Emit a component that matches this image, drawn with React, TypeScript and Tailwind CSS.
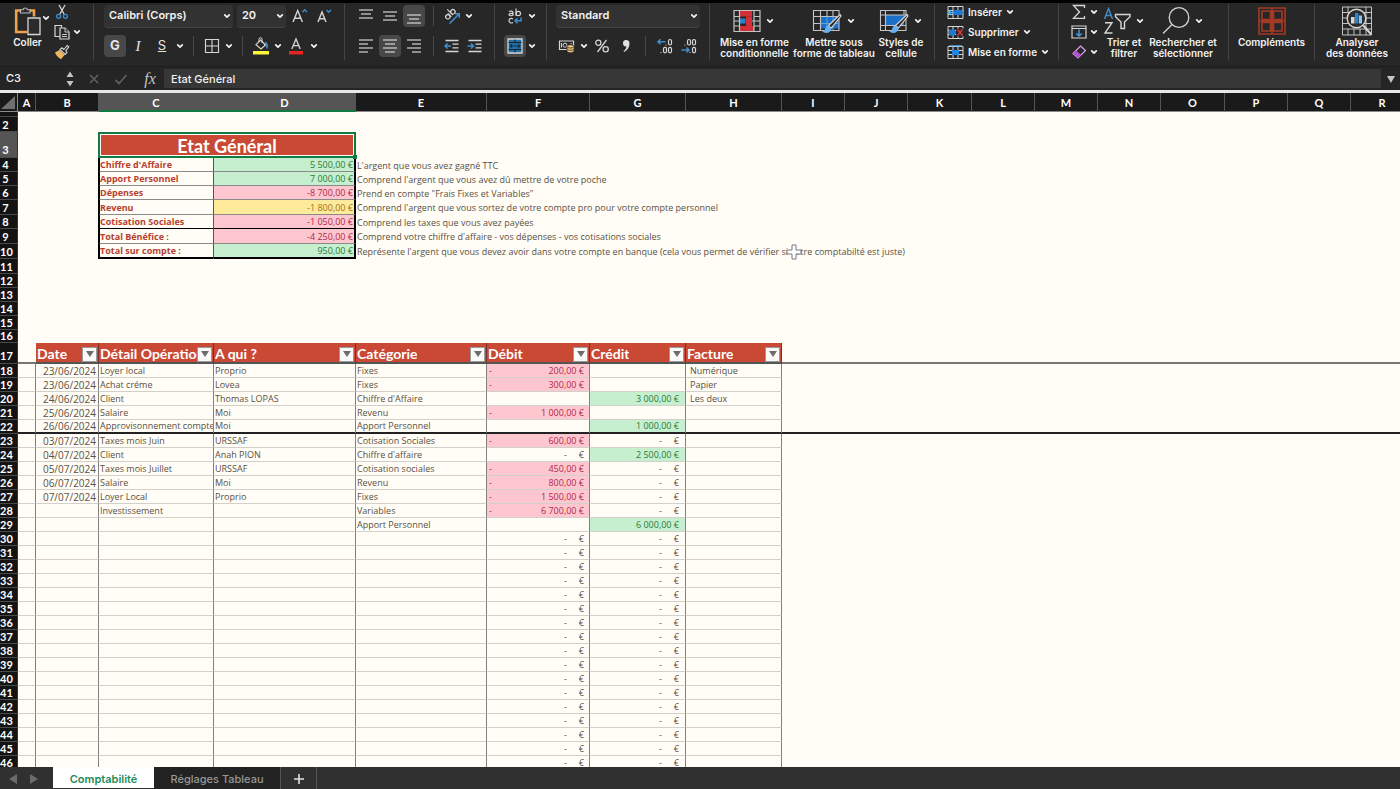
import React from 'react';

type Kids = { children?: React.ReactNode };

const Chevron = () => (
  <svg viewBox="0 0 12 12" className="h-3 w-3 shrink-0" fill="none" stroke="#f2f2f2" strokeWidth="1.7" strokeLinecap="round" strokeLinejoin="round">
    <path d="M3.7 4.8 6 7.2l2.3-2.4" />
  </svg>
);

const Sep = () => <div className="mx-[7px] h-5 w-px shrink-0 bg-[#484848]" />;

function Tool({ label, className = 'w-6', active = false, children }: Kids & { label: string; className?: string; active?: boolean }) {
  return (
    <button type="button" aria-label={label} title={label} className={`flex shrink-0 items-center justify-center ${className}`}>
      <span className={`flex h-[22px] items-center justify-center rounded-sm ${active ? 'w-[22px] bg-[#484848]' : ''}`}>{children}</span>
    </button>
  );
}

const Drop = ({ label }: { label: string }) => (
  <button type="button" aria-label={label} className="flex w-3 shrink-0 items-center justify-center">
    <Chevron />
  </button>
);

function Picker({ label, value, className }: { label: string; value: string; className: string }) {
  return (
    <label className={`relative flex h-[23px] items-center rounded-sm border-b border-[#444] bg-[#323232] ${className}`}>
      <select aria-label={label} defaultValue={value} className="h-full w-full appearance-none bg-transparent pl-[5px] text-[11px] font-semibold text-[#f2f2f2] outline-none">
        <option>{value}</option>
      </select>
      <span className="pointer-events-none absolute right-0">
        <Chevron />
      </span>
    </label>
  );
}

const Group = ({ className, children }: Kids & { className: string }) => (
  <div className={`h-14 shrink-0 border-r border-[#444] ${className}`}>{children}</div>
);

const Line = ({ className = '', children }: Kids & { className?: string }) => (
  <div className={`flex h-6 items-center ${className}`}>{children}</div>
);

function BigTool({ icon, lines, drop = true, className }: { icon: React.ReactNode; lines: string[]; drop?: boolean; className: string }) {
  return (
    <button type="button" className={`flex shrink-0 flex-col items-center text-[10px] leading-[11px] font-semibold whitespace-nowrap text-[#f2f2f2] ${className}`}>
      <span className="flex h-[33px] items-center gap-[3px]">
        {icon}
        {drop && <Chevron />}
      </span>
      {lines.map((l) => (
        <span key={l}>{l}</span>
      ))}
    </button>
  );
}

const Bars = ({ rows }: { rows: [number, number, number][] }) => (
  <svg viewBox="0 0 14 16" className="h-4 w-[14px]" stroke="#d6d6d6" strokeWidth="1.2">
    {rows.map(([a, b, y]) => (
      <path key={y} d={`M${a} ${y}H${b}`} />
    ))}
  </svg>
);

const PasteIcon = () => (
  <svg viewBox="0 0 28 30" className="h-[30px] w-7" fill="none">
    <path d="M7 4.5H2.2V26h11" stroke="#eda24b" strokeWidth="2.6" />
    <path d="M15.500 4.500h4.500v6" stroke="#eda24b" strokeWidth="2.6" />
    <path d="M6.500 7V3.800h2.500a2.300 2.300 0 0 1 4.500 0H16V7z" fill="#2b2b2b" stroke="#bdbdbd" strokeWidth="1.1" />
    <path d="M14 12h12v16.500H14z" fill="#2b2b2b" stroke="#d6d6d6" strokeWidth="1.3" />
  </svg>
);

const CutIcon = () => (
  <svg viewBox="0 0 14 16" className="h-4 w-[14px]" fill="none" strokeWidth="1.3">
    <path d="M4 1l5.300 9.500M10 1 4.700 10.500" stroke="#d6d6d6" />
    <circle cx="3.600" cy="12.300" r="2" stroke="#3f8fd0" />
    <circle cx="10.400" cy="12.300" r="2" stroke="#3f8fd0" />
  </svg>
);

const CopyIcon = () => (
  <svg viewBox="0 0 16 16" className="h-4 w-4" fill="#2b2b2b" stroke="#d6d6d6" strokeWidth="1.2">
    <path d="M6 12.500H1V1.500h6.500v2" />
    <path d="M6 4h5l4 4v7H6z" />
    <path d="M11 4v4h4M8 10.500h5M8 12.500h5" strokeWidth=".9" />
  </svg>
);

const BrushIcon = () => (
  <svg viewBox="0 0 16 16" className="h-4 w-4">
    <path d="M1 8.500 5.500 6l5 5L7 15.200C4.500 14 2.200 11.500 1 8.500z" fill="#f0b35e" />
    <path d="m6 5.500 2-1.700 1.800 1.700L13.200 1.500l1.600 1.300-3 4L13 8.500l-2 2z" fill="#2b2b2b" stroke="#d6d6d6" strokeWidth="1.1" />
  </svg>
);

const FontSizeIcon = ({ up }: { up: boolean }) => (
  <svg viewBox="0 0 18 16" className="h-4 w-[18px]" fill="none" strokeWidth="1.4">
    {up ? <path d="M2 14 6.700 2.500 11.400 14M3.500 10.200h6.400" stroke="#d6d6d6" /> : <path d="M3 14 7 4l4 10M4.300 10.700h5.400" stroke="#d6d6d6" />}
    <path d={up ? 'm11.500 4 2.200-2.200L16 4' : 'm11.500 2 2.200 2.200L16 2'} stroke="#3f8fd0" />
  </svg>
);

const BorderIcon = () => (
  <svg viewBox="0 0 16 16" className="h-4 w-4" fill="none" stroke="#d6d6d6" strokeWidth="1.100">
    <path d="M1.500 1.500h13v13h-13zM8 1.500v13M1.500 8h13" />
  </svg>
);

const BucketIcon = () => (
  <svg viewBox="0 0 18 18" className="h-[18px] w-[18px]" fill="none">
    <path d="m8.500 3 5 5-4.500 4-5-4.300z" stroke="#d6d6d6" strokeWidth="1.200" />
    <path d="M7 5V2.200a1.500 1.500 0 0 1 3 0V6" stroke="#d6d6d6" />
    <path d="M13 5.500c2 .5 2.500 3 1.800 6" stroke="#3f8fd0" strokeWidth="1.600" />
    <path d="M1 14h16v3.500H1z" fill="#fbf53c" />
  </svg>
);

const FontColorIcon = () => (
  <svg viewBox="0 0 16 18" className="h-[18px] w-4" fill="none">
    <path d="M3.800 12 8 2l4.200 10M5.200 8.700h5.600" stroke="#d6d6d6" strokeWidth="1.300" />
    <path d="M1 14h14v3.500H1z" fill="#e5231f" />
  </svg>
);

const OrientIcon = () => (
  <svg viewBox="0 0 18 18" className="h-[18px] w-[18px]" fill="none" stroke="#d6d6d6" strokeWidth="1.200">
    <g transform="rotate(-45 7 7)">
      <circle cx="3.500" cy="7.500" r="2.200" />
      <path d="M5.900 5v5M8.300 1.800v8" />
      <circle cx="10.600" cy="7.500" r="2.200" />
    </g>
    <path d="M6.500 16.500 16 7M16.300 11V6.700H12" stroke="#3f8fd0" strokeWidth="1.500" />
  </svg>
);

const IndentIcon = ({ out }: { out: boolean }) => (
  <svg viewBox="0 0 16 16" className="h-4 w-4" fill="none" strokeWidth="1.300">
    <path d="M1.500 2.500h13M8.500 6.200h6M8.500 9.800h6M1.500 13.500h13" stroke="#d6d6d6" />
    <path d={out ? 'M7 8H1M3.500 5.500 1 8l2.500 2.500' : 'M.5 8h6M4 5.500 6.500 8 4 10.500'} stroke="#3f8fd0" strokeWidth="1.500" />
  </svg>
);

const WrapIcon = () => (
  <svg viewBox="0 0 16 18" className="h-[18px] w-4" fill="none" stroke="#d6d6d6" strokeWidth="1.200">
    <path d="M2 4.600c1.500-1 4-.6 4 1v3.200M6 6.500C3.500 6.200 2 6.800 2 7.800s2.500 1.600 4-.1M9 1.500v7.300" />
    <circle cx="11.300" cy="6.500" r="2.200" />
    <path d="M6 12c-2-1.300-4-.3-4 1.700s2 3 4 1.700" />
    <path d="M14 10.500v3.300H8M10.500 11.300 8 13.800l2.500 2.500" stroke="#3f8fd0" strokeWidth="1.500" />
  </svg>
);

const MergeIcon = () => (
  <svg viewBox="0 0 16 16" className="h-4 w-4" fill="none">
    <path d="M1 1h14v14H1z" fill="#1f6fa8" stroke="#d6d6d6" strokeWidth="1.300" />
    <path d="M1.600 4.500h12.800M1.600 11.500h12.800M8 1.600v2.900M8 11.500v2.900" stroke="#222" strokeWidth="1" />
    <path d="M3 8h10M5 6.300 3 8l2 1.700M11 6.300 13 8l-2 1.700" stroke="#16344a" strokeWidth="1.200" />
  </svg>
);

const CurrencyIcon = () => (
  <svg viewBox="0 0 18 16" className="h-4 w-[18px]" fill="none">
    <path d="M1.500 3h14v8.500h-14z" stroke="#d6d6d6" strokeWidth="1.200" />
    <circle cx="7" cy="7.200" r="2" stroke="#d6d6d6" />
    <path d="M3.500 5v4.500M13 5v1" stroke="#d6d6d6" />
    <path d="M9 8.500c0-2.300 7-2.300 7 0V13c0 2.300-7 2.300-7 0z" fill="#f0c673" stroke="#2b2b2b" strokeWidth=".8" />
    <path d="M9.500 9.300c1.500 1 4.500 1 6 0M9.500 11.600c1.500 1 4.500 1 6 0" stroke="#2b2b2b" strokeWidth=".8" />
  </svg>
);

const PercentIcon = () => (
  <svg viewBox="0 0 16 16" className="h-4 w-4" fill="none" stroke="#d6d6d6" strokeWidth="1.300">
    <circle cx="4.300" cy="4.700" r="2.600" />
    <circle cx="11.700" cy="11.300" r="2.600" />
    <path d="m12.500 2-9 12" />
  </svg>
);

const CommaIcon = () => (
  <svg viewBox="0 0 10 14" className="h-[14px] w-[10px]" fill="#e0e0e0">
    <path d="M5 1a3.200 3.200 0 0 1 3.500 3.300C8.500 8.500 6.500 11.500 3 13l-.5-1c1.800-1.200 2.800-2.700 2.900-4.600A3.200 3.200 0 1 1 5 1z" />
  </svg>
);

const DecimalIcon = ({ add }: { add: boolean }) => (
  <svg viewBox="0 0 18 16" className="h-4 w-[18px]" fill="none" stroke="#d6d6d6" strokeWidth="1.200">
    {!add && <rect x="7.500" y="1.500" width="3" height="5.500" rx="1.500" />}
    <rect x="12.500" y="1.500" width="3" height="5.500" rx="1.500" />
    {add && <rect x="7.500" y="9.300" width="3" height="5.500" rx="1.500" />}
    <rect x="12.500" y="9.300" width="3" height="5.500" rx="1.500" />
    <path d={add ? 'M10 6.700v.8M5 14.200v.8' : 'M5 6.700v.8M10 14.200v.8'} strokeWidth="1.300" />
    <path d={add ? 'M9.500 3.800H2M4.500 1.300 2 3.800l2.500 2.500' : 'M1.500 12H9M6.500 9.500 9 12l-2.500 2.500'} stroke="#3f8fd0" strokeWidth="1.500" />
  </svg>
);

const BrushOver = () => (
  <>
    <path d="M28 6.500 16.500 17.500l2.800 2.700L29 8z" fill="#2b2b2b" stroke="#d6d6d6" strokeWidth="1.200" />
    <path d="M16.800 17.800c-3 0-3.300 2.200-4 4-.5 1-1.500 1.700-2.800 1.700 3.800 2.700 8.900 1.500 9.500-3z" fill="#69b1ee" />
  </>
);

const CondIcon = () => (
  <svg viewBox="0 0 28 24" className="h-6 w-7" fill="none">
    <path d="M6.500 1.500H19v6H6.500zM6.500 17H21v5H6.500z" fill="#d22f38" />
    <path d="M13 7.500h6V17h-6z" fill="#d22f38" />
    <path d="M6.500 9.500h6v5h-6z" fill="#2a83cf" />
    <path d="M1 1.500h26v21H1zM1 7.500h5.500M21 7.500h6M1 12h5.500M19 12h8M1 17h5.500M21 17h6M6.500 1.500v21M21 1.500v21" stroke="#c4c4c4" strokeWidth="1.200" />
  </svg>
);

const TableIcon = () => (
  <svg viewBox="0 0 30 26" className="h-[26px] w-[30px]" fill="none">
    <path d="M8.500 8.500H27v12H8.500z" fill="#1c70c8" />
    <path d="M1.500 2.500H27v20H1.500zM1.500 8.500H27M1.500 15.500H8.500M8.500 2.500v20M15 2.500v6M21 2.500v6" stroke="#c4c4c4" strokeWidth="1.100" />
    <path d="M8.500 15.500H27M15 8.500v14M21 8.500v14" stroke="#6ea9df" strokeWidth=".9" />
    <BrushOver />
  </svg>
);

const StylesIcon = () => (
  <svg viewBox="0 0 30 26" className="h-[26px] w-[30px]" fill="none">
    <path d="M6.500 7H25v10.500H6.500z" fill="#1c70c8" />
    <path d="M1.500 2.500H27v20H1.500zM1.500 7H27M1.500 17.500H27M6.500 2.500v20M25 2.500v5" stroke="#c4c4c4" strokeWidth="1.100" />
    <BrushOver />
  </svg>
);

const CellsIcon = ({ kind }: { kind: 'insert' | 'delete' | 'format' }) => (
  <svg viewBox="0 0 17 15" className="h-[15px] w-[17px]" fill="none">
    <path d="M1 1.500h15v12H1zM1 5.500h15M1 9.500h15M6 1.500v12M11 1.500v12" stroke="#d6d6d6" />
    {kind === 'insert' && <path d="M6 5h9.500v5H6z" fill="#1c78d2" />}
    {kind === 'insert' && <path d="M7 7.500H1.500M4 5 1.500 7.500 4 10" stroke="#57aef0" strokeWidth="1.500" />}
    {kind === 'delete' && <path d="M2 4.500h5.500L9.500 7.500l-2 3H2z" fill="#1c78d2" />}
    {kind === 'delete' && <path d="M9 3.500h8v8H9z" fill="#2b2b2b" />}
    {kind === 'delete' && <path d="m10.500 4.500 5 6m0-6-5 6" stroke="#e0343c" strokeWidth="1.500" />}
    {kind === 'format' && <path d="M5 5h7v5H5z" fill="#1c88e8" />}
    {kind === 'format' && <path d="M2 .8h13M5.500.3v1.400M11.500.3v1.400" stroke="#57aef0" />}
  </svg>
);

const SumIcon = () => (
  <svg viewBox="0 0 14 16" className="h-4 w-[14px]" fill="none" stroke="#d6d6d6" strokeWidth="1.300">
    <path d="M12.500 4V1.500h-11L7.500 8l-6 6.300h11V12" />
  </svg>
);

const FillIcon = () => (
  <svg viewBox="0 0 16 14" className="h-[14px] w-4" fill="none" stroke="#d6d6d6" strokeWidth="1.200">
    <path d="M1 1h14v12H1zM1 3.500h14" />
    <path d="M8 4.500V11M5.300 8.500 8 11l2.700-2.500" stroke="#3f9be0" strokeWidth="1.500" />
  </svg>
);

const EraserIcon = () => (
  <svg viewBox="0 0 16 16" className="h-4 w-4" fill="none" strokeWidth="1.200">
    <path d="m9.500 2 5 4.500L7 14 2 9.500z" stroke="#d9a3e6" />
    <path d="M5 6.500 10.200 11 7 14 2 9.500z" fill="#b44fd0" />
  </svg>
);

const SortIcon = () => (
  <svg viewBox="0 0 28 28" className="h-7 w-7" fill="none" strokeWidth="1.400">
    <path d="m1.500 12 4-10.500 4 10.500M2.900 8.500h5.200" stroke="#3f8fd0" />
    <path d="M2 15.700h7L2 26h7.500" stroke="#d6d6d6" />
    <path d="M12.500 7.500H27v2.300L21.500 15v6.500H18V15l-5.500-5.200z" stroke="#d6d6d6" />
  </svg>
);

const FindIcon = () => (
  <svg viewBox="0 0 28 30" className="h-[30px] w-7" fill="none" stroke="#d6d6d6" strokeWidth="1.300">
    <circle cx="17" cy="11.500" r="9.800" />
    <path d="M10 18.500 1 27.500" />
  </svg>
);

const AddinsIcon = () => (
  <svg viewBox="0 0 28 30" className="h-[30px] w-7" fill="none" stroke="#a43a26" strokeWidth="1.600">
    <path d="M1 2h26v26H1z" />
    <path d="M4 5h8.500v8.500H4zM15.500 5H24v8.500h-8.500zM4 16.500h8.500V25H4zM15.500 16.500H24V25h-8.500zM14 2v26M1 15h26" />
  </svg>
);

const AnalyseIcon = () => (
  <svg viewBox="0 0 32 32" className="h-8 w-8" fill="none">
    <path d="M1.500 2h29v28h-29zM1.500 7.500h29M1.500 13h29M1.500 18.500h29M1.500 24h29M7 24v6M13 24v6M19 24v6M25 2v28M7 2v5" stroke="#c4c4c4" />
    <circle cx="15.500" cy="13.500" r="9.300" fill="#2b2b2b" stroke="#d6d6d6" strokeWidth="1.400" />
    <path d="M10 12h3.500v6.500H10z" fill="#d6d6d6" />
    <path d="M14 8h3.500v10.500H14z" fill="#2a83cf" />
    <path d="M18 10.500h3v8h-3z" fill="#8cc4f2" />
    <path d="m22.300 20.500 8 9" stroke="#d6d6d6" strokeWidth="2" />
  </svg>
);

function Ribbon() {
  return (
    <header className="flex items-start overflow-hidden border-t-[3px] border-black bg-[#272727] pt-px pb-[6px]">
      <Group className="flex w-[94px] pl-[7px]">
        <BigTool className="w-[41px]" drop={false} icon={<PasteIcon />} lines={['Coller']} />
        <div className="-ml-2 flex w-[9px] shrink-0 items-start pt-2">
          <Drop label="Options de collage" />
        </div>
        <div className="ml-[5px] flex flex-col gap-[4px]">
          <Tool label="Couper" className="h-4 w-4"><CutIcon /></Tool>
          <div className="flex h-4 gap-px">
            <Tool label="Copier" className="w-4"><CopyIcon /></Tool>
            <Drop label="Options de copie" />
          </div>
          <Tool label="Reproduire la mise en forme" className="h-4 w-4"><BrushIcon /></Tool>
        </div>
      </Group>

      <Group className="flex w-[251px] flex-col gap-[6px] pl-[10px]">
        <Line>
          <Picker label="Police" value="Calibri (Corps)" className="mr-1 w-[129px]" />
          <Picker label="Taille" value="20" className="mr-[2px] w-[49px]" />
          <Tool label="Augmenter la taille"><FontSizeIcon up /></Tool>
          <Tool label="Diminuer la taille"><FontSizeIcon up={false} /></Tool>
        </Line>
        <Line className="text-[13px] text-[#e6e6e6]">
          <Tool label="Gras" className="w-[22px]" active><b>G</b></Tool>
          <Tool label="Italique"><i className="font-['Liberation_Serif',serif] text-[15px]">I</i></Tool>
          <Tool label="Souligné"><u>S</u></Tool>
          <Drop label="Options de soulignement" />
          <Sep />
          <Tool label="Bordures" className="w-[22px]"><BorderIcon /></Tool>
          <Drop label="Options de bordures" />
          <Sep />
          <Tool label="Remplissage" className="w-[22px]"><BucketIcon /></Tool>
          <Drop label="Couleur de remplissage" />
          <Tool label="Couleur de police"><FontColorIcon /></Tool>
          <Drop label="Options de couleur" />
        </Line>
      </Group>

      <Group className="flex w-[150px] flex-col gap-[6px] pl-[9px]">
        <Line>
          <Tool label="Aligner en haut"><Bars rows={[[0, 14, 2], [2, 12, 6], [0, 14, 10]]} /></Tool>
          <Tool label="Centrer verticalement"><Bars rows={[[0, 14, 4], [2, 12, 8], [0, 14, 12]]} /></Tool>
          <Tool label="Aligner en bas" active><Bars rows={[[0, 14, 7], [2, 12, 11], [0, 14, 15]]} /></Tool>
          <Sep />
          <Tool label="Orientation" className="w-[22px]"><OrientIcon /></Tool>
          <Drop label="Options d'orientation" />
        </Line>
        <Line>
          <Tool label="Aligner à gauche"><Bars rows={[[0, 14, 2], [0, 9, 6], [0, 14, 10], [0, 9, 14]]} /></Tool>
          <Tool label="Centrer" active><Bars rows={[[0, 14, 2], [2, 12, 6], [0, 14, 10], [2, 12, 14]]} /></Tool>
          <Tool label="Aligner à droite"><Bars rows={[[0, 14, 2], [5, 14, 6], [0, 14, 10], [5, 14, 14]]} /></Tool>
          <Sep />
          <Tool label="Diminuer le retrait" className="w-[22px]"><IndentIcon out /></Tool>
          <Tool label="Augmenter le retrait"><IndentIcon out={false} /></Tool>
        </Line>
      </Group>

      <Group className="flex w-[52px] flex-col gap-[6px] pl-[9px]">
        <Line>
          <Tool label="Renvoyer à la ligne" className="w-[22px]"><WrapIcon /></Tool>
          <Drop label="Options de renvoi" />
        </Line>
        <Line>
          <Tool label="Fusionner" className="w-[22px]" active><MergeIcon /></Tool>
          <Drop label="Options de fusion" />
        </Line>
      </Group>

      <Group className="flex w-[163px] flex-col gap-[6px] pl-[9px]">
        <Line>
          <Picker label="Format de nombre" value="Standard" className="w-[144px]" />
        </Line>
        <Line>
          <Tool label="Format monétaire" className="w-[22px]"><CurrencyIcon /></Tool>
          <Drop label="Options monétaires" />
          <Tool label="Pourcentage"><PercentIcon /></Tool>
          <Tool label="Séparateur de milliers"><CommaIcon /></Tool>
          <Sep />
          <Tool label="Ajouter une décimale"><DecimalIcon add /></Tool>
          <Tool label="Réduire les décimales"><DecimalIcon add={false} /></Tool>
        </Line>
      </Group>

      <Group className="flex w-[225px] pl-2">
        <BigTool className="w-[73px]" icon={<CondIcon />} lines={['Mise en forme', 'conditionnelle']} />
        <BigTool className="w-[86px]" icon={<TableIcon />} lines={['Mettre sous', 'forme de tableau']} />
        <BigTool className="w-12" icon={<StylesIcon />} lines={['Styles de', 'cellule']} />
      </Group>

      <Group className="flex w-[124px] flex-col gap-1 pl-3 text-[10px] font-semibold text-[#f2f2f2]">
        <button type="button" className="flex h-4 items-center"><CellsIcon kind="insert" /><span className="mr-[2px] ml-1">Insérer</span><Chevron /></button>
        <button type="button" className="flex h-4 items-center"><CellsIcon kind="delete" /><span className="mr-[2px] ml-1">Supprimer</span><Chevron /></button>
        <button type="button" className="flex h-4 items-center"><CellsIcon kind="format" /><span className="mr-[2px] ml-1 whitespace-nowrap">Mise en forme</span><Chevron /></button>
      </Group>

      <Group className="flex w-[170px] pl-[10px]">
        <div className="flex w-[33px] shrink-0 flex-col gap-1">
          <div className="flex h-4 items-center"><Tool label="Somme automatique" className="w-[19px]"><SumIcon /></Tool><Drop label="Fonctions" /></div>
          <div className="flex h-4 items-center"><Tool label="Remplir" className="w-[19px]"><FillIcon /></Tool><Drop label="Options de remplissage" /></div>
          <div className="flex h-4 items-center"><Tool label="Effacer" className="w-[19px]"><EraserIcon /></Tool><Drop label="Options d'effacement" /></div>
        </div>
        <BigTool className="w-11" icon={<SortIcon />} lines={['Trier et', 'filtrer']} />
        <BigTool className="w-[74px]" icon={<FindIcon />} lines={['Rechercher et', 'sélectionner']} />
      </Group>

      <Group className="flex w-[86px] justify-center">
        <BigTool className="w-20" drop={false} icon={<AddinsIcon />} lines={['Compléments']} />
      </Group>
      <div className="flex w-[84px] shrink-0 justify-center">
        <BigTool className="w-20" drop={false} icon={<AnalyseIcon />} lines={['Analyser', 'des données']} />
      </div>
    </header>
  );
}

function FormulaBar() {
  return (
    <div className="flex h-6 items-center border-t border-[#1c1c1c] bg-[#252525] text-[11px] font-medium text-[#f2f2f2]">
      <input aria-label="Zone Nom" defaultValue="C3" className="w-16 bg-transparent pl-[6px] outline-none" />
      <svg viewBox="0 0 8 18" className="h-[18px] w-3 shrink-0" fill="#c4c4c4">
        <path d="M4 1.500 7.500 7h-7zM4 16.500.5 11h7z" />
      </svg>
      <button type="button" aria-label="Annuler" className="ml-3 w-3">
        <svg viewBox="0 0 12 12" className="h-3 w-3" stroke="#5e5e5e" strokeWidth="1.700"><path d="m2 2 8 8M10 2l-8 8" /></svg>
      </button>
      <button type="button" aria-label="Valider" className="ml-[14px] w-[14px]">
        <svg viewBox="0 0 14 12" className="h-3 w-[14px]" fill="none" stroke="#5e5e5e" strokeWidth="1.800"><path d="m1.500 7 3.500 3.500L12.500 2" /></svg>
      </button>
      <button type="button" aria-label="Insérer une fonction" className="w-9 pr-1 pl-3 font-['Liberation_Serif',serif] text-[16px] leading-5 text-[#c4c4c4] italic">fx</button>
      <input aria-label="Barre de formule" defaultValue="Etat Général" className="h-[19px] min-w-0 flex-1 bg-[#373737] pl-[7px] outline-none" />
      <button type="button" aria-label="Développer la barre de formule" className="flex w-[19px] justify-center">
        <svg viewBox="0 0 8 8" className="h-2 w-2" fill="#c4c4c4"><path d="M0 1h8L4 8z" /></svg>
      </button>
    </div>
  );
}

const columns: [string, string][] = [
  ['A', 'w-[18px]'], ['B', 'w-[63px]'], ['C', 'w-[115px]'], ['D', 'w-[142px]'], ['E', 'w-[131px]'], ['F', 'w-[103px]'],
  ['G', 'w-[96px]'], ['H', 'w-[96px]'], ['I', 'w-[63px]'], ['J', 'w-[63px]'], ['K', 'w-[64px]'], ['L', 'w-[63px]'],
  ['M', 'w-[63px]'], ['N', 'w-[63px]'], ['O', 'w-[64px]'], ['P', 'w-[63px]'], ['Q', 'w-[63px]'], ['R', ''],
];

type Tone = 'green' | 'pink' | 'yellow';
const tones: Record<Tone, string> = {
  green: 'bg-[#c5efce] text-[#2c7a3c]',
  pink: 'bg-[#fec7d0] text-[#b0284a]',
  yellow: 'bg-[#feea9b] text-[#a4701c]',
};

const summary: { n: number; label: string; value: string; tone: Tone; note: string; h: string }[] = [
  { n: 4, label: "Chiffre d'Affaire", value: '5 500,00 €', tone: 'green', note: "L'argent que vous avez gagné TTC", h: 'h-[14px]' },
  { n: 5, label: 'Apport Personnel', value: '7 000,00 €', tone: 'green', note: "Comprend l'argent que vous avez dû mettre de votre poche", h: 'h-[14px]' },
  { n: 6, label: 'Dépenses', value: '-8 700,00 €', tone: 'pink', note: 'Prend en compte "Frais Fixes et Variables"', h: 'h-[14px]' },
  { n: 7, label: 'Revenu', value: '-1 800,00 €', tone: 'yellow', note: "Comprend l'argent que vous sortez de votre compte pro pour votre compte personnel", h: 'h-[15px]' },
  { n: 8, label: 'Cotisation Sociales', value: '-1 050,00 €', tone: 'pink', note: 'Comprend les taxes que vous avez payées', h: 'h-[14px]' },
  { n: 9, label: 'Total Bénéfice :', value: '-4 250,00 €', tone: 'pink', note: "Comprend votre chiffre d'affaire - vos dépenses - vos cotisations sociales", h: 'h-[15px]' },
  { n: 10, label: 'Total sur compte :', value: '950,00 €', tone: 'green', note: "Représente l'argent que vous devez avoir dans votre compte en banque (cela vous permet de vérifier si votre comptabilté est juste)", h: 'h-[15px]' },
];

// date, detail, who, category, debit, credit, invoice; '0' is an empty accounting amount
const entries: string[][] = [
  ['23/06/2024', 'Loyer local', 'Proprio', 'Fixes', '200,00 €', '', 'Numérique'],
  ['23/06/2024', 'Achat créme', 'Lovea', 'Fixes', '300,00 €', '', 'Papier'],
  ['24/06/2024', 'Client', 'Thomas LOPAS', "Chiffre d'Affaire", '', '3 000,00 €', 'Les deux'],
  ['25/06/2024', 'Salaire', 'Moi', 'Revenu', '1 000,00 €', '', ''],
  ['26/06/2024', 'Approvisonnement compte', 'Moi', 'Apport Personnel', '', '1 000,00 €', ''],
  ['03/07/2024', 'Taxes mois Juin', 'URSSAF', 'Cotisation Sociales', '600,00 €', '0', ''],
  ['04/07/2024', 'Client', 'Anah PION', "Chiffre d'affaire", '0', '2 500,00 €', ''],
  ['05/07/2024', 'Taxes mois Juillet', 'URSSAF', 'Cotisation sociales', '450,00 €', '0', ''],
  ['06/07/2024', 'Salaire', 'Moi', 'Revenu', '800,00 €', '0', ''],
  ['07/07/2024', 'Loyer Local', 'Proprio', 'Fixes', '1 500,00 €', '0', ''],
  ['', 'Investissement', '', 'Variables', '6 700,00 €', '0', ''],
  ['', '', '', 'Apport Personnel', '', '6 000,00 €', ''],
  ...Array.from({ length: 17 }, () => ['', '', '', '', '0', '0', '']),
];

const RowHead = ({ n, className = 'bg-[#131313]' }: { n: number | string; className?: string }) => (
  <th scope="row" className={`border-r border-b border-r-[#333] border-b-[#4a4a4a] p-0 pr-[6px] text-center align-bottom font-['Lato','Noto_Sans',sans-serif] text-[11px] leading-[12px] font-bold text-white ${className}`}>
    {n}
  </th>
);

const Blank = ({ n, h }: { n: number | string; h: string }) => (
  <tr className={h}>
    <RowHead n={n} />
    <td colSpan={18} className="p-0" />
  </tr>
);

function Amount({ value, kind, line }: { value: string; kind: 'debit' | 'credit'; line: string }) {
  const filled = value !== '' && value !== '0';
  const tone = filled ? (kind === 'debit' ? tones.pink : tones.green) : '';
  return (
    <td className={`border-r border-r-[#808080] px-[2px] pb-0 ${line} ${tone}`}>
      <div className={`flex ${kind === 'debit' ? 'pr-[3px]' : 'pr-1'} ${filled && kind === 'debit' ? 'justify-between' : 'justify-end gap-3'}`}>
        {(value === '0' || (filled && kind === 'debit')) && <span>-</span>}
        {value !== '' && <span>{value === '0' ? '€' : value}</span>}
      </div>
    </td>
  );
}

function HeadCell({ label }: { label: string }) {
  return (
    <th scope="col" className="border-r border-b-2 border-r-[#7c3025] border-b-[#555] bg-[#c94935] px-px pt-[3px] pb-0 text-left">
      <div className="flex items-center justify-between">
        <span className="min-w-0 overflow-hidden font-['Lato','Noto_Sans',sans-serif] text-[14px] leading-[16px] font-bold whitespace-nowrap text-white">{label}</span>
        <button type="button" aria-label={`Filtrer ${label}`} className="flex h-[15px] w-[15px] shrink-0 items-center justify-center border border-[#9a9a9a] bg-[#fafafa]">
          <svg viewBox="0 0 8 6" className="h-[6px] w-2" fill="#6b6b6b"><path d="M0 0h8L4 6z" /></svg>
        </button>
      </div>
    </th>
  );
}

function Sheet() {
  return (
    <main className="min-h-0 flex-1 overflow-hidden border-t-[3px] border-[#e8e8e8] bg-[#fffdf6]">
      <table className="w-full min-w-[1414px] table-fixed border-separate border-spacing-0 font-['Open_Sans','Noto_Sans',sans-serif] text-[9px] leading-[12px] whitespace-nowrap text-[#5a5044]">
        <colgroup>
          <col className="w-[18px]" />
          {columns.map(([c, w]) => <col key={c} className={w} />)}
        </colgroup>
        <thead>
          <tr className="h-[19px]">
            <th className="border-r border-b border-[#8a8a8a] bg-[#1a1a1a] p-0" aria-label="Tout sélectionner">
              <svg viewBox="0 0 16 18" className="h-[18px] w-4" fill="#707070"><path d="M15 3v13H1z" /></svg>
            </th>
            {columns.map(([c]) => (
              <th key={c} scope="col" className={`border-r p-0 pt-[2px] font-['Lato','Noto_Sans',sans-serif] text-[11px] font-bold text-white ${c === 'C' || c === 'D' ? 'border-b-2 border-r-[#555] border-b-[#107c41] bg-[#555]' : 'border-b border-r-[#555] border-b-[#8a8a8a] bg-[#1a1a1a]'}`}>{c}</th>
            ))}
          </tr>
        </thead>
        <tbody>
          <Blank n="" h="h-[5px]" />
          <Blank n={2} h="h-[15px]" />
          <tr className="h-[26px]">
            <RowHead n={3} className="bg-[#555] pb-px" />
            <td colSpan={2} className="border-r border-r-[#107c41] p-0" />
            <td colSpan={2} className="relative border-2 border-l border-[#107c41] bg-[#c94935] px-0 pt-[2px] pb-0 text-center font-['Lato','Noto_Sans',sans-serif] text-[18px] leading-5 font-bold text-white shadow-[inset_0_0_0_1px_#fff]">
              Etat Général
              <span className="absolute -right-[3px] -bottom-[3px] h-1 w-1 bg-[#107c41]" />
            </td>
            <td colSpan={14} className="p-0" />
          </tr>
          {summary.map((s) => {
            const line = s.n === 10 ? 'border-b-2 border-b-black' : s.n === 8 ? 'border-b border-b-black' : 'border-b border-b-[#8a8a8a]';
            return (
              <tr key={s.n} className={s.h}>
                <RowHead n={s.n} />
                <td colSpan={2} className="border-r border-r-black p-0" />
                <td className={`border-r border-l border-r-[#555] border-l-black px-0 pt-px pb-0 font-bold text-[#b8402f] ${line}`}>{s.label}</td>
                <td className={`border-r-2 border-r-black px-px pt-px pb-0 text-right ${line} ${tones[s.tone]}`}>{s.value}</td>
                <td colSpan={14} className="relative px-px pt-px pb-0">
                  {s.note}
                  {s.n === 10 && (
                    <svg viewBox="0 0 16 16" className="absolute top-0 left-[430px] h-4 w-4">
                      <path d="M6 1h4v5h5v4h-5v5H6v-5H1V6h5z" fill="#fff" stroke="#77778a" />
                    </svg>
                  )}
                </td>
              </tr>
            );
          })}
          <Blank n={11} h="h-[15px]" />
          {[12, 13, 14, 15].map((n) => <Blank key={n} n={n} h="h-[14px]" />)}
          <Blank n={16} h="h-[13px]" />
          <tr className="h-[21px]">
            <RowHead n={17} className="bg-[#131313] pb-px" />
            <td className="border-b-2 border-b-[#777] p-0" />
            {['Date', 'Détail Opération', 'A qui ?', 'Catégorie', 'Débit', 'Crédit', 'Facture'].map((l) => <HeadCell key={l} label={l} />)}
            <td colSpan={10} className="border-b-2 border-b-[#777] p-0" />
          </tr>
          {entries.map((e, i) => {
            const n = i + 18;
            const line = n === 22 ? 'border-b-2 border-b-[#222] pt-0' : 'border-b border-b-[#d2d0ca] pt-px';
            const cell = `border-r border-r-[#808080] overflow-hidden pb-0 ${line}`;
            return (
              <tr key={n} className="h-[14px]">
                <RowHead n={n} />
                <td className={`${cell} px-0`} />
                <td className={`${cell} px-[2px] text-right text-[10px]`}>{e[0]}</td>
                <td className={`${cell} px-px`}>{e[1]}</td>
                <td className={`${cell} px-px`}>{e[2]}</td>
                <td className={`${cell} px-px`}>{e[3]}</td>
                <Amount value={e[4]} kind="debit" line={line} />
                <Amount value={e[5]} kind="credit" line={line} />
                <td className={`${cell} px-1`}>{e[6]}</td>
                <td colSpan={10} className={n === 22 ? 'border-b-2 border-b-[#222] p-0' : 'p-0'} />
              </tr>
            );
          })}
        </tbody>
      </table>
    </main>
  );
}

function Tabs() {
  return (
    <nav aria-label="Feuilles" className="flex h-[22px] shrink-0 items-stretch bg-[#303030] text-[11px] font-semibold">
      <div className="flex w-[53px] items-center gap-[13px] pt-[2px] pl-[9px]">
        <button type="button" aria-label="Feuille précédente"><svg viewBox="0 0 8 10" className="h-[10px] w-2" fill="#6b6b6b"><path d="M8 0v10L0 5z" /></svg></button>
        <button type="button" aria-label="Feuille suivante"><svg viewBox="0 0 8 10" className="h-[10px] w-2" fill="#6b6b6b"><path d="M0 0v10l8-5z" /></svg></button>
      </div>
      <button type="button" className="mb-px w-[101px] bg-white pt-[3px] text-[#1d8a56]">Comptabilité</button>
      <button type="button" className="w-[127px] border-r border-[#555] bg-[#222] pt-[2px] font-medium text-[#989898]">Réglages Tableau</button>
      <button type="button" aria-label="Ajouter une feuille" className="flex w-9 items-center justify-center border-r border-[#555] pt-[2px]">
        <svg viewBox="0 0 10 10" className="h-[10px] w-[10px]" stroke="#e0e0e0" strokeWidth="1.600"><path d="M5 0v10M0 5h10" /></svg>
      </button>
    </nav>
  );
}

export default function App() {
  return (
    <div className="flex h-screen flex-col overflow-hidden bg-[#272727] font-['Inter',sans-serif]">
      <Ribbon />
      <FormulaBar />
      <Sheet />
      <Tabs />
    </div>
  );
}
